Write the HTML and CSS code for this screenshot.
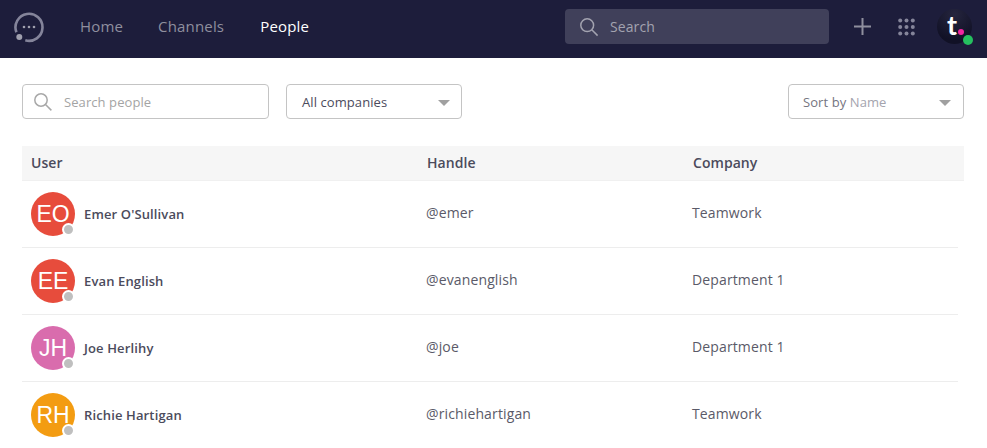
FILE: index.html
```html
<!DOCTYPE html>
<html lang="en">
<head>
<meta charset="utf-8">
<title>People</title>
<link rel="stylesheet" href="styles.css">
</head>
<body>
<header class="topbar">
  <svg class="logo" width="32" height="32" viewBox="0 0 32 32" fill="none">
    <path d="M3.4 21.2 A13.5 13.5 0 1 1 12.3 29.3" stroke="#84849a" stroke-width="2.6"/>
    <circle cx="6.3" cy="26" r="3" fill="#a0a0ae"/>
    <circle cx="11" cy="16" r="1.3" fill="#a0a0ae"/>
    <circle cx="16" cy="16" r="1.3" fill="#a0a0ae"/>
    <circle cx="21" cy="16" r="1.3" fill="#a0a0ae"/>
  </svg>
  <nav class="nav">
    <a class="nav-link">Home</a>
    <a class="nav-link">Channels</a>
    <a class="nav-link active">People</a>
  </nav>
  <div class="top-search">
    <svg width="20" height="20" viewBox="0 0 20 20" fill="none" stroke="#a3a3b0" stroke-width="1.5">
      <circle cx="8.2" cy="8.2" r="6.4"/><path d="M12.8 12.8 L18.6 18.6"/>
    </svg>
    <span>Search</span>
  </div>
  <svg class="plus" width="17" height="17" viewBox="0 0 17 17" stroke="#8f8f9e" stroke-width="2"><path d="M8.5 0V17M0 8.5H17"/></svg>
  <svg class="grid" width="17" height="18" viewBox="0 0 17 18" fill="#85859a">
    <circle cx="2.2" cy="2.5" r="2"/><circle cx="8.5" cy="2.5" r="2"/><circle cx="14.8" cy="2.5" r="2"/>
    <circle cx="2.2" cy="9" r="2"/><circle cx="8.5" cy="9" r="2"/><circle cx="14.8" cy="9" r="2"/>
    <circle cx="2.2" cy="15.5" r="2"/><circle cx="8.5" cy="15.5" r="2"/><circle cx="14.8" cy="15.5" r="2"/>
  </svg>
  <div class="me">
    <span class="me-t">t</span>
    <i class="me-dot"></i>
    <i class="me-status"></i>
  </div>
</header>

<main class="content">
  <div class="filters">
    <div class="field people-search">
      <svg width="20" height="20" viewBox="0 0 20 20" fill="none" stroke="#a8a8a8" stroke-width="1.5">
        <circle cx="8" cy="8" r="6.2"/><path d="M12.5 12.5 L18.4 18.4"/>
      </svg>
      <span class="placeholder">Search people</span>
    </div>
    <div class="field company">
      <span>All companies</span><i class="caret"></i>
    </div>
    <div class="field sort">
      <span class="sort-label">Sort by <span class="sort-value">Name</span></span><i class="caret"></i>
    </div>
  </div>

  <div class="thead">
    <div class="col-user">User</div>
    <div class="col-handle">Handle</div>
    <div class="col-company">Company</div>
  </div>

  <div class="row">
    <div class="col-user"><div class="avatar red">EO<i class="status"></i></div><span class="name">Emer O'Sullivan</span></div>
    <div class="col-handle">@emer</div>
    <div class="col-company">Teamwork</div>
  </div>
  <div class="row">
    <div class="col-user"><div class="avatar red">EE<i class="status"></i></div><span class="name">Evan English</span></div>
    <div class="col-handle">@evanenglish</div>
    <div class="col-company">Department 1</div>
  </div>
  <div class="row">
    <div class="col-user"><div class="avatar pink">JH<i class="status"></i></div><span class="name">Joe Herlihy</span></div>
    <div class="col-handle">@joe</div>
    <div class="col-company">Department 1</div>
  </div>
  <div class="row">
    <div class="col-user"><div class="avatar orange">RH<i class="status"></i></div><span class="name">Richie Hartigan</span></div>
    <div class="col-handle">@richiehartigan</div>
    <div class="col-company">Teamwork</div>
  </div>
</main>
</body>
</html>
```
FILE: styles.css
```css
* { box-sizing: border-box; }
html, body { margin: 0; height: 100%; overflow: hidden; }
body { background: #fff; font-family: "Open Sans", sans-serif; color: #4b4b5c; }

.topbar {
  height: 58px;
  background: #1d1d3b;
  display: flex;
  align-items: center;
  padding: 0 15px 5px 13px;
}
.logo { flex: none; }
.nav { display: flex; gap: 35px; margin: 0 0 2px 35px; font-size: 15px; letter-spacing: 0.17px; }
.nav-link { color: #8f8f9e; }
.nav-link.active { color: #fff; margin-left: 1px; }
.top-search {
  width: 264px;
  height: 35px;
  margin-left: auto;
  background: #40405a;
  border-radius: 4px;
  display: flex;
  align-items: center;
  padding-left: 14px;
  gap: 11px;
  color: #a3a3b0;
  font-size: 14px;
  letter-spacing: 0.1px;
}
.plus { margin-left: 25px; flex: none; }
.grid { margin-left: 27px; flex: none; }
.me {
  position: relative;
  width: 35px;
  height: 35px;
  margin-left: 22px;
  border-radius: 50%;
  background: radial-gradient(circle at 50% 15%, #25253e, #111126 75%);
  flex: none;
}
.me-t {
  position: absolute;
  left: 10px;
  top: -1px;
  color: #fff;
  font-size: 27px;
  line-height: 33px;
  font-weight: 700;
  font-family: "Lato", sans-serif;
}
.me-dot { position: absolute; left: 21px; top: 20px; width: 6px; height: 6px; border-radius: 50%; background: #f0259f; }
.me-status { position: absolute; left: 26px; top: 26px; width: 10px; height: 10px; border-radius: 50%; background: #25c05f; }

.content { padding: 26px 23px 0 22px; }
.filters { display: flex; align-items: center; height: 35px; }
.field {
  height: 35px;
  border: 1px solid #c4c4c4;
  border-radius: 4px;
  background: #fff;
  display: flex;
  align-items: center;
  font-size: 13px;
  letter-spacing: 0.08px;
}
.people-search { width: 247px; padding-left: 10px; gap: 11px; }
.placeholder { color: #a4a4a4; }
.company { width: 176px; margin-left: 17px; padding: 0 11px 0 15px; justify-content: space-between; color: #4b4b5c; }
.sort { width: 176px; margin-left: auto; padding: 0 12px 0 14px; justify-content: space-between; }
.sort-label { color: #75757f; }
.sort-value { color: #a4a4ae; }
.caret {
  width: 0; height: 0;
  border-left: 6px solid transparent;
  border-right: 6px solid transparent;
  border-top: 6px solid #a0a0a0;
  margin-top: 3px;
}

.thead, .row { display: flex; align-items: center; }
.thead {
  margin-top: 27px;
  height: 35px;
  background: #f6f6f6;
  border-bottom: 1px solid #f0f0f0;
  font-size: 14px;
  font-weight: 600;
  color: #4b4b5c;
  padding: 0 0 2px 9px;
  letter-spacing: 0.05px;
}
.thead .col-user { width: 396px; }
.thead .col-handle { width: 266px; }
.row {
  height: 67px;
  margin-right: 6px;
  border-bottom: 1px solid #ededed;
  padding-left: 9px;
  font-size: 14px;
  color: #5a5a68;
  letter-spacing: 0.13px;
}
.row .col-handle, .row .col-company { margin-top: -4px; }
.row .col-user { width: 395px; display: flex; align-items: center; gap: 9px; }
.row .col-handle { width: 266px; }
.avatar {
  position: relative;
  width: 44px;
  height: 44px;
  border-radius: 50%;
  color: #fff;
  font-family: "Liberation Sans", sans-serif;
  font-size: 23px;
  letter-spacing: 0;
  display: flex;
  align-items: center;
  justify-content: center;
  flex: none;
}
.red { background: #e74c3c; }
.pink { background: #d96cad; }
.orange { background: #f39c12; }
.status {
  position: absolute;
  right: 0;
  bottom: 0;
  width: 13px;
  height: 13px;
  border-radius: 50%;
  background: #bfbfbf;
  border: 2px solid #fff;
}
.name { font-size: 13px; font-weight: 600; color: #4b4b5c; }
```
